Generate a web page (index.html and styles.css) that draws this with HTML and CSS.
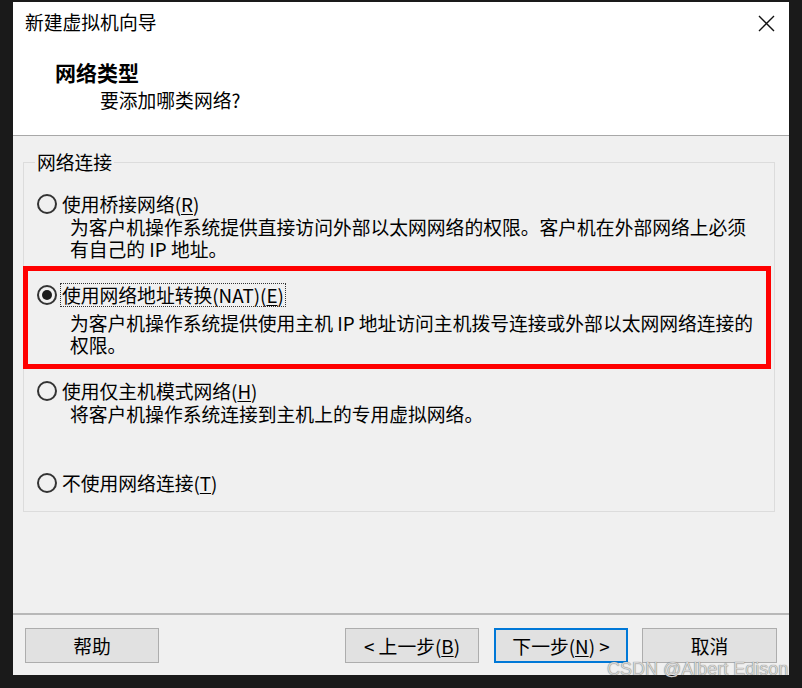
FILE: index.html
```html
<!DOCTYPE html>
<html lang="zh-CN">
<head>
<meta charset="utf-8">
<title>新建虚拟机向导</title>
<link rel="stylesheet" href="styles.css">
</head>
<body>
<div class="win">
  <div class="header">
    <div class="titlebar">
      <span class="title">新建虚拟机向导</span>
      <svg class="close" width="17" height="17" viewBox="0 0 17 17"><path d="M1 1 L16 16 M16 1 L1 16" stroke="#111" stroke-width="1.4" fill="none"/></svg>
    </div>
    <div class="heading">网络类型</div>
    <div class="sub">要添加哪类网络?</div>
  </div>
  <div class="body">
    <div class="group">
      <div class="group-label">网络连接</div>
      <div class="opt opt1">
        <div class="opt-row"><span class="radio"></span><span class="opt-label">使用桥接网络(<u>R</u>)</span></div>
        <div class="desc">
          <div class="line">为客户机操作系统提供直接访问外部以太网网络的权限。客户机在外部网络上必须</div>
          <div class="line">有自己的 IP 地址。</div>
        </div>
      </div>
      <div class="opt opt2">
        <div class="opt-row"><span class="radio checked"></span><span class="opt-label focus">使用网络地址转换(NAT)(<u>E</u>)</span></div>
        <div class="desc desc2">
          <div class="line">为客户机操作系统提供使用主机 IP 地址访问主机拨号连接或外部以太网网络连接的</div>
          <div class="line">权限。</div>
        </div>
      </div>
      <div class="opt opt3">
        <div class="opt-row"><span class="radio"></span><span class="opt-label">使用仅主机模式网络(<u>H</u>)</span></div>
        <div class="desc">
          <div class="line">将客户机操作系统连接到主机上的专用虚拟网络。</div>
        </div>
      </div>
      <div class="opt opt4">
        <div class="opt-row"><span class="radio"></span><span class="opt-label">不使用网络连接(<u>T</u>)</span></div>
      </div>
      <div class="highlight"></div>
    </div>
  </div>
  <div class="footer">
    <button class="btn">帮助</button>
    <span class="spacer"></span>
    <button class="btn">&lt; 上一步(<u>B</u>)</button>
    <button class="btn btn-default">下一步(<u>N</u>) &gt;</button>
    <button class="btn btn-cancel">取消</button>
  </div>
</div>
<div class="watermark">CSDN @Albert Edison</div>
</body>
</html>
```
FILE: styles.css
```css
html, body {
  margin: 0;
  padding: 0;
}
body {
  background: #1a1a1a;
  font-family: "Noto Sans CJK SC", "Microsoft YaHei", sans-serif;
  font-size: 18.8px;
  color: #000;
  width: 802px;
  height: 688px;
  overflow: hidden;
  position: relative;
}
.win {
  margin: 2px 0 0 13px;
  width: 776px;
  height: 673px;
  background: #f0f0f0;
  display: flex;
  flex-direction: column;
}
.header {
  background: #fff;
  border-bottom: 1px solid #a8a8a8;
  padding-top: 9px;
  height: 124px;
}
.titlebar {
  display: flex;
  justify-content: space-between;
  align-items: center;
  padding: 0 14px 0 12px;
  height: 22px;
  line-height: 22px;
}
.close {
  display: block;
  margin-top: 2px;
}
.heading {
  margin-top: 28px;
  padding-left: 42px;
  line-height: 22px;
  font-weight: bold;
  font-size: 21px;
}
.sub {
  margin-top: 6px;
  padding-left: 87px;
  line-height: 22px;
}
.body {
  flex: 1;
  padding-top: 26px;
}
.group {
  position: relative;
  margin-left: 10px;
  width: 752px;
  height: 350px;
  box-sizing: border-box;
  border: 1px solid #dcdcdc;
  padding-left: 13px;
}
.group-label {
  margin-top: -12px;
  margin-left: -2px;
  padding: 0 2px;
  width: fit-content;
  background: #f0f0f0;
  line-height: 22px;
}
.opt-row {
  display: flex;
  align-items: center;
  height: 24px;
  gap: 4px;
}
.opt-label {
  line-height: 22px;
  white-space: nowrap;
  padding: 0 1px;
}
.opt-label.focus {
  outline: 1px dotted #333;
  outline-offset: 0;
}
.radio {
  width: 20px;
  height: 20px;
  box-sizing: border-box;
  border: 2px solid #333;
  border-radius: 50%;
  display: flex;
  align-items: center;
  justify-content: center;
  flex: none;
}
.radio.checked::after {
  content: "";
  width: 10px;
  height: 10px;
  border-radius: 50%;
  background: #1a1a1a;
}
.desc {
  margin-left: 33px;
  white-space: nowrap;
}
.line {
  height: 22px;
  line-height: 22px;
}
.desc2 {
  margin-top: 5px;
}
.opt1 {
  margin-top: 19px;
}
.opt2 {
  margin-top: 23px;
}
.opt3 {
  margin-top: 23px;
}
.opt4 {
  margin-top: 46px;
}
.highlight {
  position: absolute;
  left: -1px;
  top: 103px;
  width: 748px;
  height: 103px;
  box-sizing: border-box;
  border: 5px solid #ff0000;
}
.footer {
  border-top: 2px solid #b8b8b8;
  height: 47px;
  padding: 13px 12px 0 12px;
  display: flex;
  align-items: flex-start;
}
.spacer {
  flex: 1;
}
.btn {
  width: 134px;
  height: 35px;
  box-sizing: border-box;
  background: #e1e1e1;
  border: 1px solid #adadad;
  font-family: inherit;
  font-size: 18.8px;
  color: #000;
  padding: 0;
  line-height: 22px;
}
.btn + .btn {
  margin-left: 15px;
}
.btn-cancel {
  margin-left: 14px !important;
  width: 135px;
}
.btn-default {
  border: 2px solid #0078d7;
}
u {
  text-decoration: underline;
  text-underline-offset: 2px;
}
.watermark {
  position: absolute;
  left: 607px;
  top: 659px;
  font-family: "Liberation Sans", Arial, sans-serif;
  font-size: 18px;
  color: #d4d4d4;
  text-shadow: 0 0 1px #555;
  white-space: nowrap;
}
```
